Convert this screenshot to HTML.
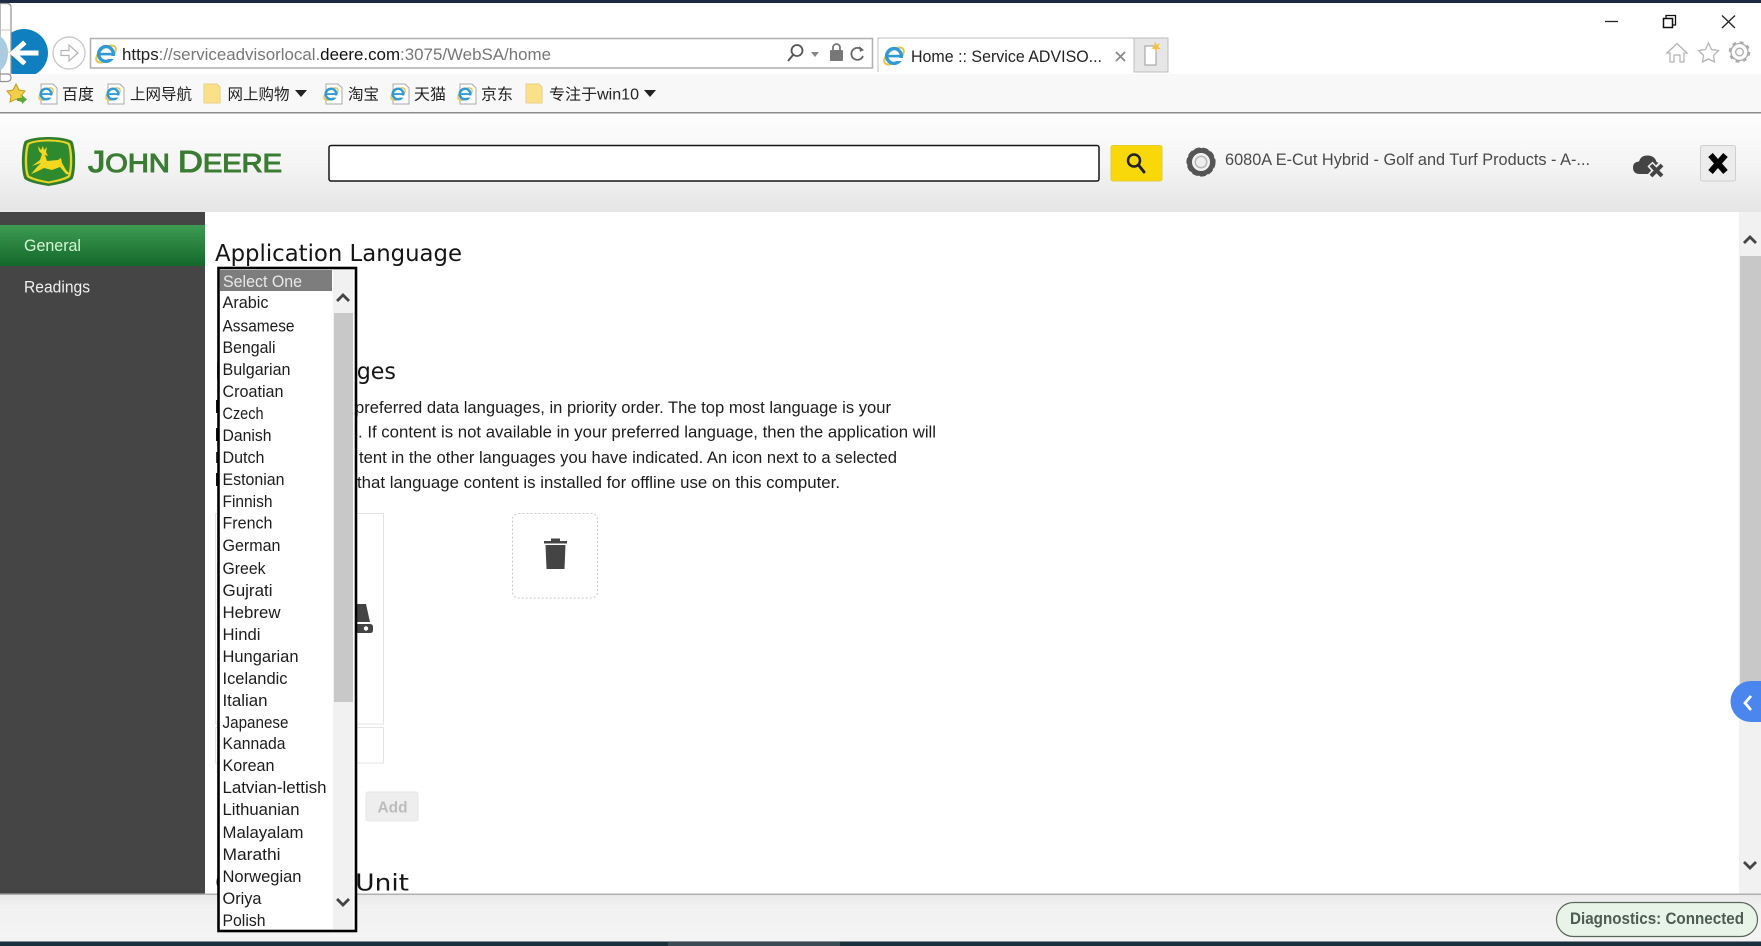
<!DOCTYPE html>
<html><head><meta charset="utf-8"><title>Home :: Service ADVISOR</title>
<style>
html,body{margin:0;padding:0;width:1761px;height:946px;overflow:hidden;background:#fff}
svg{display:block}
text{font-family:"Liberation Sans","Noto Sans CJK SC",sans-serif;white-space:pre}
.cjk{font-family:"Liberation Sans","Noto Sans CJK SC",sans-serif;font-size:15.5px;fill:#222}
.li{font-size:17px;fill:#1c1c1c}
.p{font-size:17px;fill:#1c1c1c}
.h{font-family:"DejaVu Sans","Liberation Sans",sans-serif;font-size:23.5px;fill:#151515}
</style></head><body>
<svg width="1761" height="946" viewBox="0 0 1761 946" xmlns="http://www.w3.org/2000/svg">
<defs>
<linearGradient id="hdr" x1="0" y1="0" x2="0" y2="1"><stop offset="0" stop-color="#fdfdfd"/><stop offset=".5" stop-color="#f5f5f5"/><stop offset="1" stop-color="#e5e5e5"/></linearGradient>
<linearGradient id="grn" x1="0" y1="0" x2="0" y2="1"><stop offset="0" stop-color="#3d9c52"/><stop offset="1" stop-color="#14682a"/></linearGradient>
<linearGradient id="foot" x1="0" y1="0" x2="0" y2="1"><stop offset="0" stop-color="#e8e8e8"/><stop offset=".25" stop-color="#f1f1f1"/><stop offset="1" stop-color="#f4f4f4"/></linearGradient>
<g id="ie"><ellipse cx="0" cy="0" rx="11.500" ry="6" transform="rotate(-38)" fill="none" stroke="#e6c54c" stroke-width="2"/><circle r="7.400" fill="none" stroke="#2f9ad6" stroke-width="3.400"/><rect x="-6" y="-1.200" width="12.500" height="2.600" fill="#2f9ad6"/><rect x="2" y="2" width="7" height="3" fill="#fff"/></g>
<g id="pg"><path d="M-6-10H6L10-6V10H-6Z" fill="#fff" stroke="#aaa"/><g transform="translate(-1,0) scale(.72)"><use href="#ie"/></g></g>
<path id="fold" d="M-8-10H5L8-7V9H-8Z" fill="#fbe08a" stroke="#e9cf86"/>
</defs>

<!-- browser chrome -->
<rect width="1761" height="74" fill="#fff"/>
<rect width="1761" height="3" fill="#1b2942"/>

<!-- back / forward -->
<circle cx="24" cy="53" r="24" fill="#0f7fc0"/>
<path d="M0 3.500H7Q11 3.500 11 7.500V77.500Q11 81.500 7 81.500H0Z" fill="#fff" stroke="#8f8f8f" stroke-width="1.200"/>
<path d="M0 36Q8 42 8 53Q8 64 0 71Z" fill="#a8cbe0"/>
<path d="M0 30H10M0 52H10" stroke="#c4c4c4"/>
<path d="M36 53H14M23 44L13 53L23 62" fill="none" stroke="#fff" stroke-width="5" stroke-linecap="square"/>
<circle cx="69" cy="53" r="16" fill="#fff" stroke="#c4c4c4" stroke-width="1.200"/>
<path d="M61 50.500H69V45L78 53L69 61V55.500H61Z" fill="none" stroke="#b5b5b5" stroke-width="1.200"/>

<rect y="74" width="1761" height="38" fill="#f8f8f8"/>
<path d="M0 74H7.500Q11 74 11 77.500Q11 81.500 7 81.500H0Z" fill="#fff" stroke="#8f8f8f" stroke-width="1.200"/>
<rect y="112" width="1761" height="1.600" fill="#8c8c8c"/>

<!-- address bar -->
<rect x="90.500" y="38.500" width="782" height="29.500" fill="#fff" stroke="#b3b3b3" stroke-width="1.600"/>
<use href="#ie" x="106" y="54"/>
<text x="122" y="60" font-size="16.500" textLength="429" lengthAdjust="spacingAndGlyphs" fill="#777"><tspan fill="#222">https</tspan>://serviceadvisorlocal.<tspan fill="#111">deere.com</tspan>:3075/WebSA/home</text>
<circle cx="797" cy="50.500" r="5.500" fill="none" stroke="#555" stroke-width="1.800"/><path d="M793 55L788 61" stroke="#555" stroke-width="2"/>
<path d="M811 52H819L815 57Z" fill="#888"/>
<rect x="830" y="50" width="13" height="11" rx="1" fill="#777"/><path d="M833 50V47.500A3.500 3.500 0 0 1 840 47.500V50" fill="none" stroke="#777" stroke-width="1.800"/>
<path d="M862 50A6 6 0 1 0 863 56" fill="none" stroke="#666" stroke-width="1.800"/><path d="M859 46L864 50L860 52Z" fill="#666"/>

<!-- tab -->
<path d="M878 72V38H1134V72" fill="#fff" stroke="#bcbcbc" stroke-width="1"/>
<use href="#ie" x="894" y="56"/>
<text x="911" y="62" font-size="16.500" textLength="191" lengthAdjust="spacingAndGlyphs" fill="#222">Home :: Service ADVISO...</text>
<path d="M1116 52L1125 61M1125 52L1116 61" stroke="#888" stroke-width="1.800"/>
<rect x="1134" y="38" width="34" height="34" fill="#e6e6e6" stroke="#bcbcbc"/>
<path d="M1145 46H1156V65H1145Z" fill="#fff" stroke="#999"/>
<path d="M1155 41L1156.500 45L1160 43L1158 47L1161 49L1157 49L1156 52L1154.500 49L1151 48.500L1154 46.500Z" fill="#f3c23c"/>

<!-- window controls -->
<path d="M1605 21.500H1618" stroke="#222" stroke-width="1.300"/>
<rect x="1663.500" y="18.500" width="9" height="9" fill="#fff" stroke="#111" stroke-width="1.500"/>
<path d="M1666 18V15.500H1675.500V25H1673" fill="none" stroke="#111" stroke-width="1.300"/>
<path d="M1722 15.500L1735 28M1735 15.500L1722 28" stroke="#222" stroke-width="1.300"/>
<path d="M1667 53L1677 43.500L1687 53H1684V62H1680V55H1674V62H1670V53Z" fill="none" stroke="#b5b5b5" stroke-width="1.300"/>
<path d="M1708.500 43L1711.500 49.500L1718.500 50.500L1713.500 55.500L1714.500 62L1708.500 59L1702.500 62L1703.500 55.500L1698.500 50.500L1705.500 49.500Z" fill="none" stroke="#b5b5b5" stroke-width="1.300"/>
<circle cx="1739.500" cy="52" r="3.800" fill="none" stroke="#aaa" stroke-width="1.300"/>
<circle cx="1739.500" cy="52" r="8.500" fill="none" stroke="#aaa" stroke-width="1.300"/>
<circle cx="1739.500" cy="52" r="9.800" fill="none" stroke="#aaa" stroke-width="2" stroke-dasharray="3.800 3.900"/>

<!-- favorites bar -->
<path d="M16 84L19 90L25 91L21 96L22 102L16 99L10 102L11 96L7 91L13 90Z" fill="#f2d04a" stroke="#c49a20"/>
<path d="M17 98H22V95L27 99.500L22 104V101H17Z" fill="#5aa83c"/>
<use href="#pg" x="47" y="94"/>
<text class="cjk" x="62" y="99.500" textLength="32" lengthAdjust="spacingAndGlyphs">百度</text>
<use href="#pg" x="114" y="94"/>
<text class="cjk" x="130" y="99.500" textLength="62" lengthAdjust="spacingAndGlyphs">上网导航</text>
<use href="#fold" x="212" y="94"/>
<text class="cjk" x="227.500" y="99.500" textLength="62" lengthAdjust="spacingAndGlyphs">网上购物</text>
<path d="M295 90H307L301 97Z" fill="#222"/>
<use href="#pg" x="332" y="94"/>
<text class="cjk" x="348" y="99.500" textLength="31" lengthAdjust="spacingAndGlyphs">淘宝</text>
<use href="#pg" x="399" y="94"/>
<text class="cjk" x="414" y="99.500" textLength="32" lengthAdjust="spacingAndGlyphs">天猫</text>
<use href="#pg" x="466" y="94"/>
<text class="cjk" x="481" y="99.500" textLength="32" lengthAdjust="spacingAndGlyphs">京东</text>
<use href="#fold" x="534" y="94"/>
<text class="cjk" x="549" y="99.500" textLength="90" lengthAdjust="spacingAndGlyphs">专注于win10</text>
<path d="M644 90H656L650 97Z" fill="#222"/>

<!-- app header -->
<rect y="113.500" width="1761" height="98.500" fill="url(#hdr)"/>
<path d="M48.500 137C60 137 70 139 72.500 141.500C76 150 76 172 72.500 179C68 182.500 58 184.500 48.500 186C39 184.500 29 182.500 24.500 179C21 172 21 150 24.500 141.500C27 139 37 137 48.500 137Z" fill="#2f7d2d"/>
<path d="M48.500 139.500C59 139.500 68 141.500 70 143.500C73 152 73 170 70 177C66 180 57 182 48.500 183.500C40 182 31 180 27 177C24 170 24 152 27 143.500C29 141.500 38 139.500 48.500 139.500Z" fill="#e8d326"/>
<path d="M48.500 141.500C58 141.500 66 143 68 145C70.500 153 70.500 169 68 175.500C64.500 178 56 180 48.500 181.500C41 180 32.500 178 29 175.500C26.500 169 26.500 153 29 145C31 143 39 141.500 48.500 141.500Z" fill="#2f8a2e"/>
<path d="M38 146L41 150L43 146L44 150L47 147L46 152L48 156L45 155L47 161L58 160L61 158L62 163L66 170L71 175L66 174L60 167L52 170L44 168L36 172L31 174L37 167L41 163L32 166L40 160L42 154L39 151Z" fill="#f4d820"/>
<text x="88" y="172" font-family="Liberation Sans" fill="#3a7d32" stroke="#3a7d32" stroke-width="1.100" textLength="194" lengthAdjust="spacingAndGlyphs"><tspan font-size="31">J</tspan><tspan font-size="26">OHN </tspan><tspan font-size="31">D</tspan><tspan font-size="26">EERE</tspan></text>

<rect x="329" y="145.500" width="770" height="35.500" rx="2" fill="#fff" stroke="#161616" stroke-width="1.500"/>
<rect x="1111" y="145.500" width="51" height="35.500" rx="2" fill="#f9d80a" stroke="#e8cc30"/>
<circle cx="1134" cy="160.500" r="6" fill="none" stroke="#222" stroke-width="2.500"/><path d="M1138.500 165L1144 172" stroke="#222" stroke-width="3" stroke-linecap="round"/>
<circle cx="1201" cy="162" r="11.500" fill="none" stroke="#555" stroke-width="5"/>
<circle cx="1201" cy="162" r="13.300" fill="none" stroke="#555" stroke-width="2.600" stroke-dasharray="5.500 2.500"/>
<circle cx="1201" cy="162" r="8.500" fill="#f2f2f2"/>
<circle cx="1201" cy="162" r="6.500" fill="#b8b8b8"/>
<circle cx="1201" cy="162" r="5" fill="#eeeeee"/>
<text x="1225" y="165" font-size="17" textLength="365" lengthAdjust="spacingAndGlyphs" fill="#4a4a4a">6080A E-Cut Hybrid - Golf and Turf Products - A-...</text>
<path d="M1640 174Q1633 174 1633 167.500Q1633 162 1639 161.500Q1641 155 1648 155.500Q1655 156 1656.500 162Q1661 163 1661.500 167L1655 174Z" fill="#444"/>
<path d="M1650 164L1662 177M1662 164L1650 177" stroke="#f2f2f2" stroke-width="7"/>
<path d="M1651 165L1662 176M1662 165L1651 176" stroke="#444" stroke-width="4"/>
<rect x="1700.500" y="145.500" width="35" height="35.500" rx="2" fill="#ececec" stroke="#cfcfcf"/>
<path d="M1710.500 155L1725.500 172M1725.500 155L1710.500 172" stroke="#000" stroke-width="6"/>

<!-- sidebar -->
<rect y="212" width="205" height="682" fill="#454545"/>
<rect y="225" width="205" height="41" fill="url(#grn)"/>
<text x="24" y="251" font-size="17" textLength="57" lengthAdjust="spacingAndGlyphs" fill="#d6f5d6">General</text>
<text x="24" y="292.500" font-size="17" textLength="66" lengthAdjust="spacingAndGlyphs" fill="#f0f0f0">Readings</text>

<!-- content -->
<text class="h" x="215" y="261" textLength="247" lengthAdjust="spacingAndGlyphs">Application Language</text>
<text class="h" x="215" y="379" textLength="181" lengthAdjust="spacingAndGlyphs">Data Languages</text>
<rect x="216" y="400" width="2" height="13" fill="#111"/>
<rect x="216" y="428" width="2" height="13" fill="#111"/>
<rect x="216" y="452" width="2" height="11" fill="#333"/>
<rect x="216" y="473" width="2" height="13" fill="#111"/>
<text class="p" x="355" y="413" textLength="536" lengthAdjust="spacingAndGlyphs">preferred data languages, in priority order. The top most language is your</text>
<text class="p" x="358" y="437.500" textLength="578" lengthAdjust="spacingAndGlyphs">. If content is not available in your preferred language, then the application will</text>
<text class="p" x="359" y="463" textLength="538" lengthAdjust="spacingAndGlyphs">tent in the other languages you have indicated. An icon next to a selected</text>
<text class="p" x="357" y="488" textLength="483" lengthAdjust="spacingAndGlyphs">that language content is installed for offline use on this computer.</text>

<rect x="215.500" y="513.500" width="168" height="210.500" fill="#fff" stroke="#e4e4e4"/>
<rect x="215.500" y="727.500" width="168" height="35.500" fill="#fff" stroke="#e4e4e4"/>
<path d="M357 604H366L370 622H357Z" fill="#444"/>
<path d="M357 624H370Q373 624 373 627V630Q373 633 370 633H357Z" fill="#444"/><circle cx="366" cy="628.500" r="2.200" fill="#fff"/>

<rect x="512.500" y="513.500" width="85" height="84.500" rx="6" fill="#fff" stroke="#c9c9c9" stroke-dasharray="2 2"/>
<path d="M544 541H567V543.500H544ZM551 541V538.500H560V541Z" fill="#444"/>
<path d="M545.500 545H565.500L564.500 569H546.500Z" fill="#444"/>

<rect x="366" y="792" width="52" height="29" rx="2" fill="#eee" stroke="#e6e6e6"/>
<text x="377.500" y="812.500" font-size="16" font-weight="bold" textLength="30" lengthAdjust="spacingAndGlyphs" fill="#bcbcbc">Add</text>
<text class="h" x="215" y="890.500" textLength="194" lengthAdjust="spacingAndGlyphs">Operating Unit</text>

<!-- right scrollbar -->
<rect x="1739" y="212" width="22" height="682" fill="#f1f1f1"/>
<rect x="1740" y="256" width="21" height="446" fill="#c8c8c8"/>
<path d="M1744 243L1750 237L1756 243" fill="none" stroke="#444" stroke-width="2.800"/>
<path d="M1744 862L1750 868L1756 862" fill="none" stroke="#444" stroke-width="2.800"/>
<path d="M1761 681H1751A20.500 20.500 0 0 0 1751 722H1761Z" fill="#4a86ee"/>
<path d="M1751 696L1745 703L1751 710" fill="none" stroke="#fff" stroke-width="2.800"/>

<!-- footer -->
<rect y="894" width="1761" height="48" fill="url(#foot)"/>
<rect y="893.500" width="1761" height="1.500" fill="#b0b0b0"/>
<rect y="941.500" width="1761" height="4.500" fill="#1a2f3c"/>
<rect x="668" y="942" width="172" height="4" fill="#3a4a54"/>
<rect x="1556.500" y="902.500" width="201" height="34" rx="17" fill="#e9f4e9" stroke="#5a665a" stroke-width="1.200"/>
<text x="1570" y="924" font-size="16.500" font-weight="bold" textLength="174" lengthAdjust="spacingAndGlyphs" fill="#4c5c50">Diagnostics: Connected</text>

<!-- select list popup -->
<rect x="218.500" y="268" width="137.500" height="663" fill="#fff" stroke="#000" stroke-width="2.600"/>
<rect x="220" y="270" width="112" height="21" fill="#7d7d7d"/>
<rect x="333" y="270" width="20" height="659" fill="#f1f1f1"/>
<rect x="334" y="313" width="19" height="389" fill="#c8c8c8"/>
<path d="M337 301L343 295L349 301" fill="none" stroke="#444" stroke-width="2.800"/>
<path d="M337 899L343 905L349 899" fill="none" stroke="#444" stroke-width="2.800"/>
<text x="223" y="287" font-size="17" textLength="79" lengthAdjust="spacingAndGlyphs" fill="#e8e8e8">Select One</text>
<text class="li" x="222.500" y="308" textLength="46" lengthAdjust="spacingAndGlyphs">Arabic</text>
<text class="li" x="222.500" y="331.500" textLength="72" lengthAdjust="spacingAndGlyphs">Assamese</text>
<text class="li" x="222.500" y="353" textLength="53" lengthAdjust="spacingAndGlyphs">Bengali</text>
<text class="li" x="222.500" y="375" textLength="68" lengthAdjust="spacingAndGlyphs">Bulgarian</text>
<text class="li" x="222.500" y="397" textLength="61" lengthAdjust="spacingAndGlyphs">Croatian</text>
<text class="li" x="222.500" y="419" textLength="41" lengthAdjust="spacingAndGlyphs">Czech</text>
<text class="li" x="222.500" y="441" textLength="49" lengthAdjust="spacingAndGlyphs">Danish</text>
<text class="li" x="222.500" y="463" textLength="42" lengthAdjust="spacingAndGlyphs">Dutch</text>
<text class="li" x="222.500" y="485" textLength="62" lengthAdjust="spacingAndGlyphs">Estonian</text>
<text class="li" x="222.500" y="507" textLength="50" lengthAdjust="spacingAndGlyphs">Finnish</text>
<text class="li" x="222.500" y="528.500" textLength="50" lengthAdjust="spacingAndGlyphs">French</text>
<text class="li" x="222.500" y="551" textLength="58" lengthAdjust="spacingAndGlyphs">German</text>
<text class="li" x="222.500" y="574" textLength="43" lengthAdjust="spacingAndGlyphs">Greek</text>
<text class="li" x="222.500" y="596" textLength="50" lengthAdjust="spacingAndGlyphs">Gujrati</text>
<text class="li" x="222.500" y="618" textLength="58" lengthAdjust="spacingAndGlyphs">Hebrew</text>
<text class="li" x="222.500" y="640" textLength="38" lengthAdjust="spacingAndGlyphs">Hindi</text>
<text class="li" x="222.500" y="662" textLength="76" lengthAdjust="spacingAndGlyphs">Hungarian</text>
<text class="li" x="222.500" y="684" textLength="65" lengthAdjust="spacingAndGlyphs">Icelandic</text>
<text class="li" x="222.500" y="706" textLength="45" lengthAdjust="spacingAndGlyphs">Italian</text>
<text class="li" x="222.500" y="728" textLength="66" lengthAdjust="spacingAndGlyphs">Japanese</text>
<text class="li" x="222.500" y="749" textLength="63" lengthAdjust="spacingAndGlyphs">Kannada</text>
<text class="li" x="222.500" y="771" textLength="52" lengthAdjust="spacingAndGlyphs">Korean</text>
<text class="li" x="222.500" y="793" textLength="104" lengthAdjust="spacingAndGlyphs">Latvian-lettish</text>
<text class="li" x="222.500" y="815" textLength="77" lengthAdjust="spacingAndGlyphs">Lithuanian</text>
<text class="li" x="222.500" y="838" textLength="81" lengthAdjust="spacingAndGlyphs">Malayalam</text>
<text class="li" x="222.500" y="860" textLength="58" lengthAdjust="spacingAndGlyphs">Marathi</text>
<text class="li" x="222.500" y="882" textLength="79" lengthAdjust="spacingAndGlyphs">Norwegian</text>
<text class="li" x="222.500" y="904" textLength="39" lengthAdjust="spacingAndGlyphs">Oriya</text>
<text class="li" x="222.500" y="926" textLength="43" lengthAdjust="spacingAndGlyphs">Polish</text>
</svg>
</body></html>
